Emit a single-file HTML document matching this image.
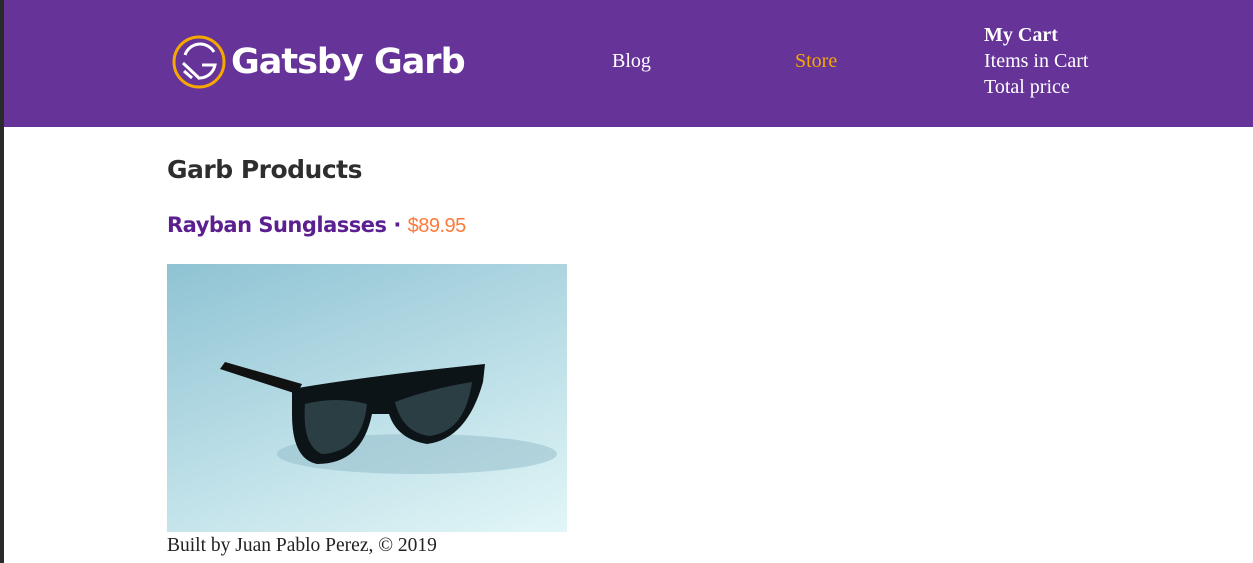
<!DOCTYPE html>
<html><head><style>
body{margin:0;width:1253px;height:563px;overflow:hidden;background:#fff;position:relative;font-family:"Liberation Serif",serif}
.strip{position:absolute;left:0;top:0;width:4px;height:563px;background:#2a2a2a}
.hdr{position:absolute;left:4px;top:0;width:1249px;height:127px;background:#663399}
.t{position:absolute;white-space:nowrap}
</style></head><body>
<div class="strip"></div>
<div class="hdr"></div>
<svg style="position:absolute;left:172px;top:35px" width="54" height="54" viewBox="0 0 54 54">
<circle cx="27" cy="27" r="25" fill="none" stroke="#f6a800" stroke-width="3"/>
<path d="M13 20 A16 16 0 0 1 42 17" stroke="#fff" stroke-width="3" fill="none"/>
<path d="M11 28 L28 44 M12 36 L20 43 M30 30 H43 A16 16 0 0 1 28 43" stroke="#fff" stroke-width="3" fill="none"/>
</svg>
<div class="t" style="left:231px;top:42px;font:bold 35px 'DejaVu Sans',sans-serif;color:#fff;letter-spacing:-1px">Gatsby Garb</div>
<div class="t" style="left:612px;top:50px;font-size:20px;color:#fff">Blog</div>
<div class="t" style="left:795px;top:50px;font-size:20px;color:#f6a800">Store</div>
<div class="t" style="left:984px;top:24px;font-size:20px;color:#fff;font-weight:bold">My Cart</div>
<div class="t" style="left:984px;top:50px;font-size:20px;color:#fff">Items in Cart</div>
<div class="t" style="left:984px;top:76px;font-size:20px;color:#fff">Total price</div>
<div class="t" style="left:167px;top:155px;font:bold 25px 'DejaVu Sans',sans-serif;color:#2e2e2e;letter-spacing:-0.5px">Garb Products</div>
<div class="t" style="left:167px;top:213px;font:bold 21px 'DejaVu Sans',sans-serif;color:#5b1f8f;letter-spacing:-0.5px">Rayban Sunglasses · <span style="font-weight:normal;color:#ff7a3a;font-size:20px;font-family:'Liberation Sans',sans-serif">$89.95</span></div>
<div style="position:absolute;left:167px;top:264px;width:400px;height:268px;background:linear-gradient(160deg,#8fc3d3 0%,#b9dde6 50%,#e2f6f7 100%)">
<svg width="400" height="268" viewBox="0 0 400 268">
<ellipse cx="250" cy="190" rx="140" ry="20" fill="#8fbac8" opacity=".5"/>
<path d="M53 105 L130 130 L135 120 L58 98Z" fill="#111"/>
<path d="M125 125 Q200 112 318 100 L316 118 Q300 175 260 180 Q230 175 222 150 L205 150 Q195 200 150 200 Q125 195 125 150Z" fill="#0d1418"/>
<path d="M138 140 Q170 132 200 140 Q195 188 155 190 Q135 182 138 140Z M228 138 Q262 125 305 118 Q298 168 262 172 Q235 168 228 138Z" fill="#2a3e44"/>
</svg></div>
<div class="t" style="left:167px;top:535px;font-size:19.5px;color:#222">Built by Juan Pablo Perez, © 2019</div>
</body></html>
